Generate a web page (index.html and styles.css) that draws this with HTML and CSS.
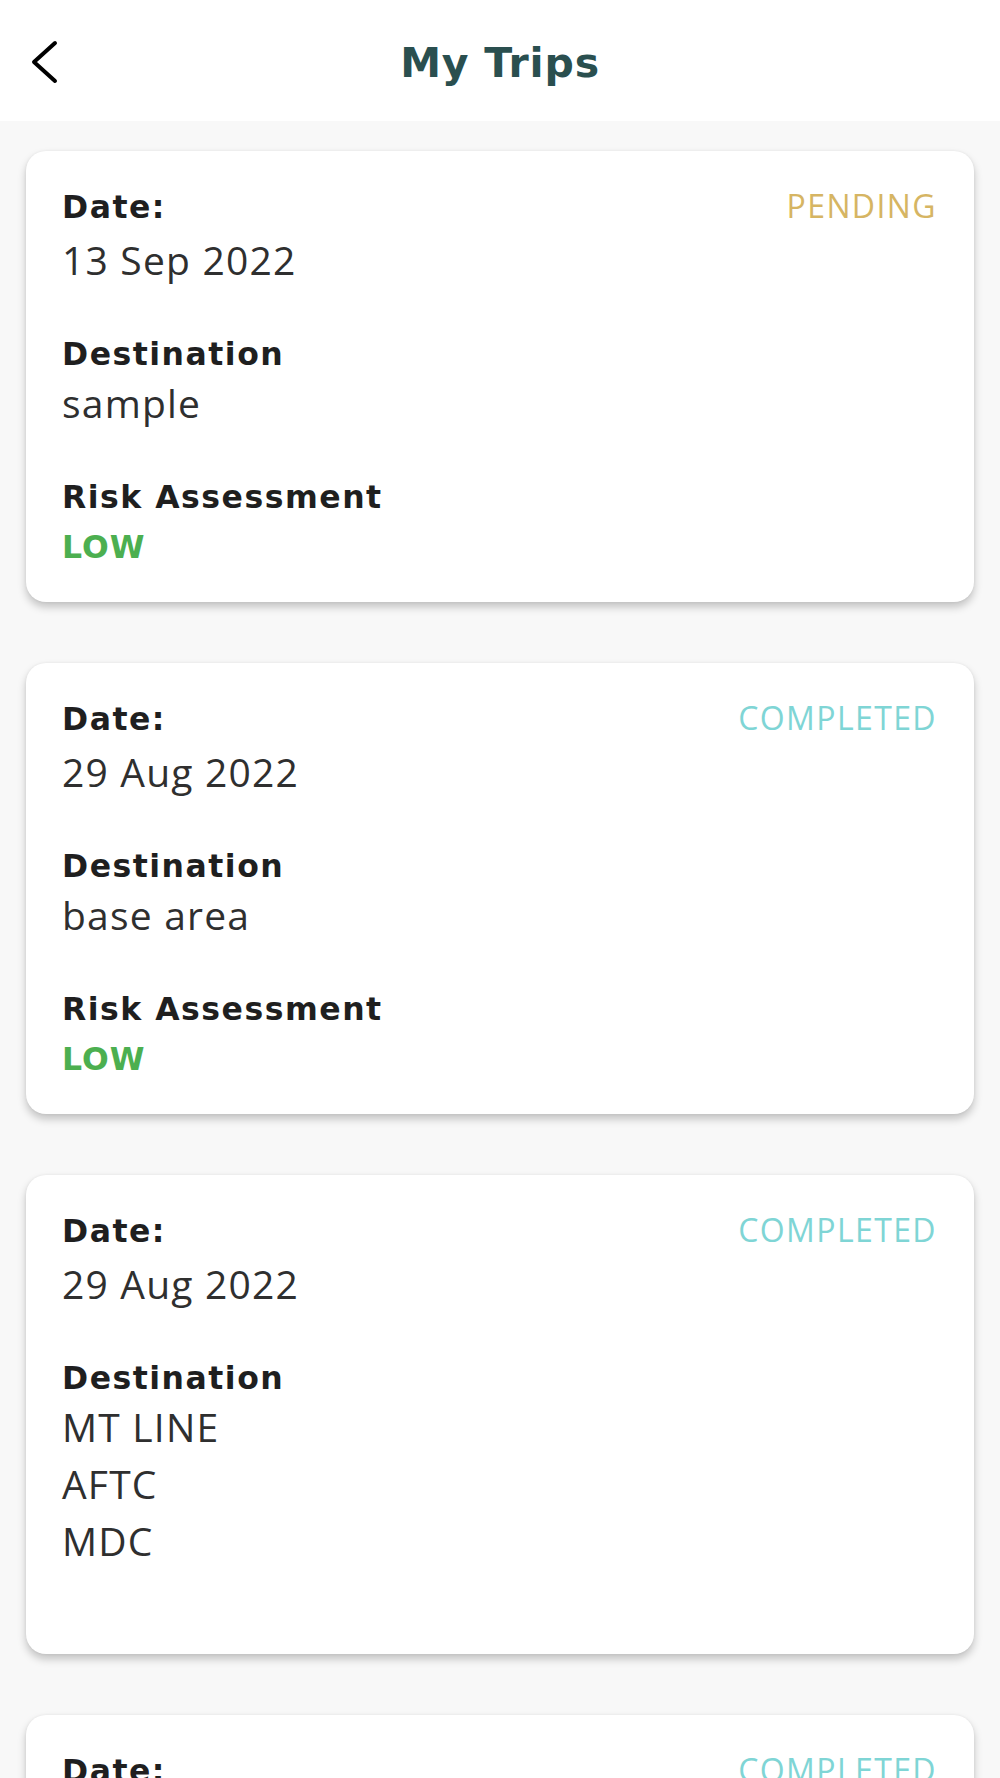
FILE: index.html
```html
<!DOCTYPE html>
<html lang="en">
<head>
<meta charset="utf-8">
<title>My Trips</title>
<link rel="stylesheet" href="styles.css">
</head>
<body>
<header class="topbar">
  <div class="topbar-left">
    <svg class="back" width="30" height="44" viewBox="0 0 30 44" aria-hidden="true">
      <polyline points="25,3 4,22 25,41" fill="none" stroke="#000" stroke-width="4" stroke-linecap="round" stroke-linejoin="round"/>
    </svg>
  </div>
  <h1 class="title">My Trips</h1>
  <div></div>
</header>

<main class="list">
  <section class="card">
    <div class="row">
      <div class="label">Date:</div>
      <div class="status pending">PENDING</div>
    </div>
    <div class="value date">13 Sep 2022</div>
    <div class="field">
      <div class="label">Destination</div>
      <div class="value">sample</div>
    </div>
    <div class="field">
      <div class="label">Risk Assessment</div>
      <div class="value risk low">LOW</div>
    </div>
  </section>

  <section class="card">
    <div class="row">
      <div class="label">Date:</div>
      <div class="status completed">COMPLETED</div>
    </div>
    <div class="value date">29 Aug 2022</div>
    <div class="field">
      <div class="label">Destination</div>
      <div class="value">base area</div>
    </div>
    <div class="field">
      <div class="label">Risk Assessment</div>
      <div class="value risk low">LOW</div>
    </div>
  </section>

  <section class="card">
    <div class="row">
      <div class="label">Date:</div>
      <div class="status completed">COMPLETED</div>
    </div>
    <div class="value date">29 Aug 2022</div>
    <div class="field">
      <div class="label">Destination</div>
      <div class="value">MT LINE<br>AFTC<br>MDC<br>&nbsp;</div>
    </div>
  </section>

  <section class="card">
    <div class="row">
      <div class="label">Date:</div>
      <div class="status completed">COMPLETED</div>
    </div>
    <div class="value date">29 Aug 2022</div>
    <div class="field">
      <div class="label">Destination</div>
      <div class="value">base area</div>
    </div>
    <div class="field">
      <div class="label">Risk Assessment</div>
      <div class="value risk low">LOW</div>
    </div>
  </section>
</main>
</body>
</html>
```

FILE: styles.css
```css
html, body {
  margin: 0;
  padding: 0;
}

body {
  background: #f8f8f8;
  font-family: "Open Sans", "DejaVu Sans", sans-serif;
  color: #2e2e2e;
}

.topbar {
  height: 121px;
  background: #ffffff;
  display: grid;
  grid-template-columns: 1fr auto 1fr;
  align-items: center;
  box-sizing: border-box;
}

.topbar-left {
  display: flex;
  align-items: center;
  padding-left: 30px;
  padding-top: 2px;
}

.back {
  display: block;
}

.title {
  margin: 0;
  padding-top: 4px;
  font-family: "DejaVu Sans", sans-serif;
  font-weight: bold;
  font-size: 41px;
  line-height: 48px;
  color: #2a4f4f;
  letter-spacing: 0.8px;
}

.list {
  display: flex;
  flex-direction: column;
  gap: 61px;
  padding: 30px 26px 40px;
}

.card {
  background: #ffffff;
  border-radius: 20px;
  padding: 36px 37px 28px 36px;
  box-shadow: 0 5px 9px rgba(0, 0, 0, 0.22), 0 0 3px rgba(0, 0, 0, 0.06);
}

.row {
  display: flex;
  justify-content: space-between;
  align-items: baseline;
}

.field {
  margin-top: 46px;
}

.label {
  font-family: "DejaVu Sans", sans-serif;
  font-weight: bold;
  font-size: 31.5px;
  line-height: 40px;
  color: #1f1f1f;
  letter-spacing: 1.5px;
}

.value {
  font-family: "Open Sans", sans-serif;
  font-size: 39px;
  line-height: 57px;
  color: #2f2f2f;
  letter-spacing: 1.2px;
}

.value.date {
  margin-top: 4px;
}

.value.risk {
  font-family: "DejaVu Sans", sans-serif;
  font-weight: bold;
  font-size: 31.5px;
  line-height: 54px;
  padding-top: 3px;
  letter-spacing: 1px;
}

.low {
  color: #4caf50;
}

.status {
  font-family: "Open Sans", sans-serif;
  font-size: 32px;
  line-height: 37px;
  letter-spacing: 1.4px;
}

.pending {
  color: #d6b563;
}

.completed {
  color: #7fd5d5;
}
```
